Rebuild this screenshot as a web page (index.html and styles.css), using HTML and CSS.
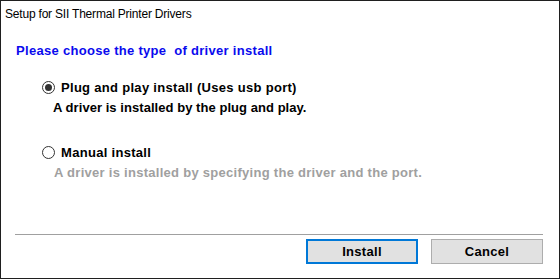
FILE: index.html
```html
<!DOCTYPE html>
<html>
<head>
    <title>Setup for SII Thermal Printer Drivers</title>
    <link rel="stylesheet" href="styles.css">
</head>
<body>
    <div class="window">
        <div class="titlebar">Setup for SII Thermal Printer Drivers</div>

        <div class="content">
            <h1 class="prompt">Please choose the type&nbsp; of driver install</h1>

            <div class="options">
                <label class="option">
                    <span class="radio checked"></span>
                    <span class="option-label">Plug and play install (Uses usb port)</span>
                </label>
                <p class="option-desc">A driver is installed by the plug and play.</p>

                <label class="option second">
                    <span class="radio"></span>
                    <span class="option-label">Manual install</span>
                </label>
                <p class="option-desc muted">A driver is installed by specifying the driver and the port.</p>
            </div>
        </div>

        <div class="footer">
            <hr class="separator">
            <div class="buttons">
                <button class="btn default">Install</button>
                <button class="btn">Cancel</button>
            </div>
        </div>
    </div>
</body>
</html>
```

FILE: styles.css
```css
* {
    margin: 0;
    padding: 0;
    box-sizing: border-box;
}

body {
    background: #ffffff;
    font-family: "Liberation Sans", Arial, sans-serif;
}

.window {
    width: 560px;
    height: 279px;
    border: 1px solid #1f1f1f;
    display: flex;
    flex-direction: column;
    background: #ffffff;
}

.titlebar {
    height: 30px;
    padding: 6px 0 0 4px;
    font-size: 12px;
    letter-spacing: -0.2px;
    color: #000000;
}

.content {
    flex: 1;
    padding: 12px 0 0 15px;
}

.prompt {
    font-size: 13px;
    font-weight: bold;
    letter-spacing: 0.3px;
    color: #0a0aee;
    line-height: 15px;
}

.options {
    padding: 21px 0 0 26px;
}

.option {
    display: flex;
    align-items: center;
    gap: 6px;
    height: 16px;
    font-size: 13px;
    font-weight: bold;
    letter-spacing: 0.3px;
    color: #000000;
}

.option.second {
    margin-top: 29px;
}

.radio {
    width: 13px;
    height: 13px;
    border: 1px solid #333333;
    border-radius: 50%;
    background: #ffffff;
    position: relative;
}

.radio.checked::after {
    content: "";
    position: absolute;
    left: 2px;
    top: 2px;
    width: 7px;
    height: 7px;
    border-radius: 50%;
    background: #333333;
}

.option-desc {
    font-size: 13px;
    font-weight: bold;
    letter-spacing: 0.05px;
    padding: 5px 0 0 11px;
    line-height: 15px;
}

.option-desc.muted {
    color: #a0a0a0;
    letter-spacing: 0.28px;
    padding-left: 12px;
}

.footer {
    padding: 0 16px 14px 14px;
}

.separator {
    border: none;
    border-top: 1px solid #a0a0a0;
    margin-bottom: 4px;
}

.buttons {
    display: flex;
    justify-content: flex-end;
    gap: 13px;
}

.btn {
    width: 112px;
    height: 25px;
    background: #e1e1e1;
    border: 1px solid #adadad;
    font-family: "Liberation Sans", Arial, sans-serif;
    font-size: 13px;
    font-weight: bold;
    letter-spacing: 0.3px;
    color: #000000;
}

.btn.default {
    border: 2px solid #0078d7;
}
```
